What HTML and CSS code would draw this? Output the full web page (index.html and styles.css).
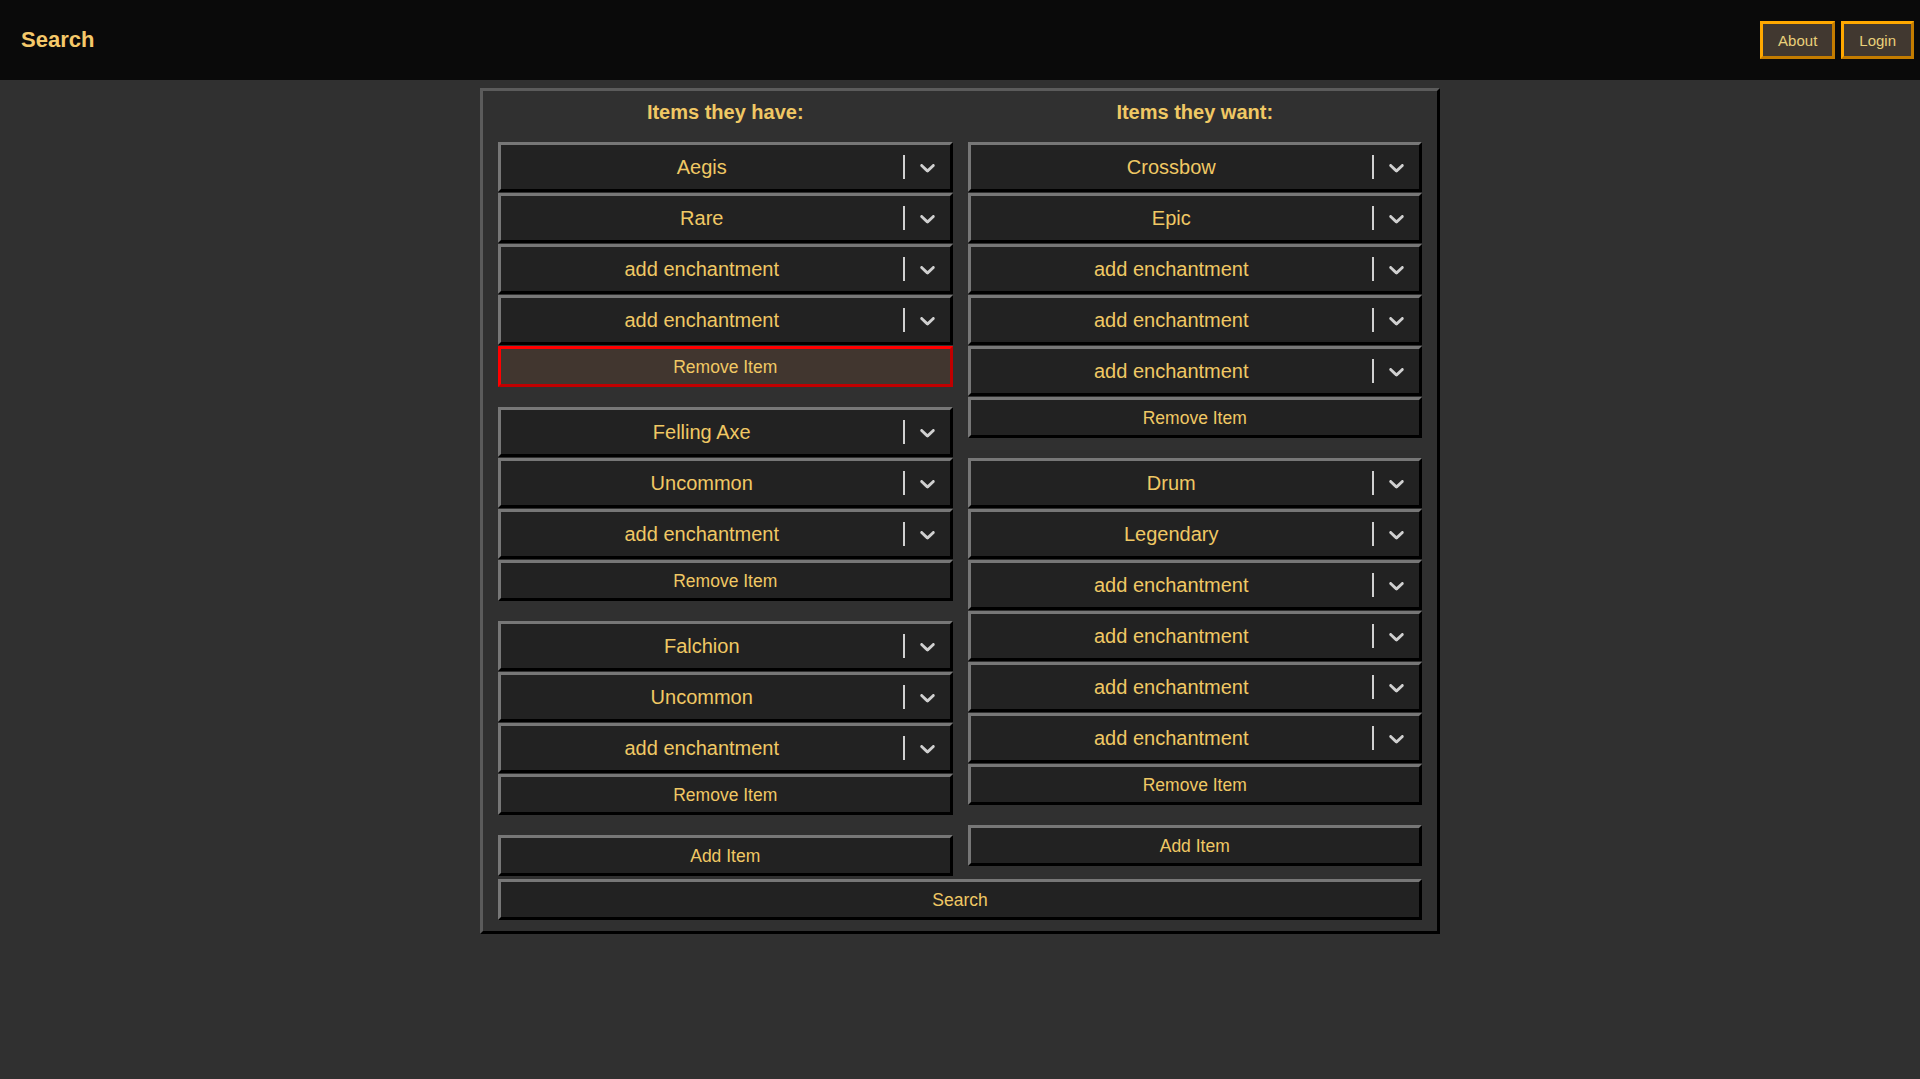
FILE: index.html
```html
<!DOCTYPE html>
<html>
<head>
<meta charset="utf-8">
<link rel="stylesheet" href="styles.css">
</head>
<body>
<header class="topbar">
  <div class="brand">Search</div>
  <nav class="nav">
    <button class="navbtn">About</button>
    <button class="navbtn">Login</button>
  </nav>
</header>
<main class="panel">
  <div class="cols">
    <section class="col">
      <div class="colhead">Items they have:</div>
      <div class="group">
        <div class="sel"><span class="val">Aegis</span><span class="sep"></span><span class="ind"><svg viewBox="0 0 20 20" width="25" height="25"><path d="M4.516 7.548c0.436-0.446 1.043-0.481 1.576 0l3.908 3.747 3.908-3.747c0.533-0.481 1.141-0.446 1.574 0 0.436 0.445 0.408 1.197 0 1.615-0.406 0.418-4.695 4.502-4.695 4.502-0.217 0.223-0.502 0.335-0.787 0.335s-0.57-0.112-0.789-0.335c0 0-4.287-4.084-4.695-4.502s-0.436-1.17 0-1.615z"/></svg></span></div>
        <div class="sel"><span class="val">Rare</span><span class="sep"></span><span class="ind"><svg viewBox="0 0 20 20" width="25" height="25"><path d="M4.516 7.548c0.436-0.446 1.043-0.481 1.576 0l3.908 3.747 3.908-3.747c0.533-0.481 1.141-0.446 1.574 0 0.436 0.445 0.408 1.197 0 1.615-0.406 0.418-4.695 4.502-4.695 4.502-0.217 0.223-0.502 0.335-0.787 0.335s-0.57-0.112-0.789-0.335c0 0-4.287-4.084-4.695-4.502s-0.436-1.17 0-1.615z"/></svg></span></div>
        <div class="sel"><span class="val">add enchantment</span><span class="sep"></span><span class="ind"><svg viewBox="0 0 20 20" width="25" height="25"><path d="M4.516 7.548c0.436-0.446 1.043-0.481 1.576 0l3.908 3.747 3.908-3.747c0.533-0.481 1.141-0.446 1.574 0 0.436 0.445 0.408 1.197 0 1.615-0.406 0.418-4.695 4.502-4.695 4.502-0.217 0.223-0.502 0.335-0.787 0.335s-0.57-0.112-0.789-0.335c0 0-4.287-4.084-4.695-4.502s-0.436-1.17 0-1.615z"/></svg></span></div>
        <div class="sel"><span class="val">add enchantment</span><span class="sep"></span><span class="ind"><svg viewBox="0 0 20 20" width="25" height="25"><path d="M4.516 7.548c0.436-0.446 1.043-0.481 1.576 0l3.908 3.747 3.908-3.747c0.533-0.481 1.141-0.446 1.574 0 0.436 0.445 0.408 1.197 0 1.615-0.406 0.418-4.695 4.502-4.695 4.502-0.217 0.223-0.502 0.335-0.787 0.335s-0.57-0.112-0.789-0.335c0 0-4.287-4.084-4.695-4.502s-0.436-1.17 0-1.615z"/></svg></span></div>
        <button class="btn btn-danger">Remove Item</button>
      </div>
      <div class="group">
        <div class="sel"><span class="val">Felling Axe</span><span class="sep"></span><span class="ind"><svg viewBox="0 0 20 20" width="25" height="25"><path d="M4.516 7.548c0.436-0.446 1.043-0.481 1.576 0l3.908 3.747 3.908-3.747c0.533-0.481 1.141-0.446 1.574 0 0.436 0.445 0.408 1.197 0 1.615-0.406 0.418-4.695 4.502-4.695 4.502-0.217 0.223-0.502 0.335-0.787 0.335s-0.57-0.112-0.789-0.335c0 0-4.287-4.084-4.695-4.502s-0.436-1.17 0-1.615z"/></svg></span></div>
        <div class="sel"><span class="val">Uncommon</span><span class="sep"></span><span class="ind"><svg viewBox="0 0 20 20" width="25" height="25"><path d="M4.516 7.548c0.436-0.446 1.043-0.481 1.576 0l3.908 3.747 3.908-3.747c0.533-0.481 1.141-0.446 1.574 0 0.436 0.445 0.408 1.197 0 1.615-0.406 0.418-4.695 4.502-4.695 4.502-0.217 0.223-0.502 0.335-0.787 0.335s-0.57-0.112-0.789-0.335c0 0-4.287-4.084-4.695-4.502s-0.436-1.17 0-1.615z"/></svg></span></div>
        <div class="sel"><span class="val">add enchantment</span><span class="sep"></span><span class="ind"><svg viewBox="0 0 20 20" width="25" height="25"><path d="M4.516 7.548c0.436-0.446 1.043-0.481 1.576 0l3.908 3.747 3.908-3.747c0.533-0.481 1.141-0.446 1.574 0 0.436 0.445 0.408 1.197 0 1.615-0.406 0.418-4.695 4.502-4.695 4.502-0.217 0.223-0.502 0.335-0.787 0.335s-0.57-0.112-0.789-0.335c0 0-4.287-4.084-4.695-4.502s-0.436-1.17 0-1.615z"/></svg></span></div>
        <button class="btn">Remove Item</button>
      </div>
      <div class="group">
        <div class="sel"><span class="val">Falchion</span><span class="sep"></span><span class="ind"><svg viewBox="0 0 20 20" width="25" height="25"><path d="M4.516 7.548c0.436-0.446 1.043-0.481 1.576 0l3.908 3.747 3.908-3.747c0.533-0.481 1.141-0.446 1.574 0 0.436 0.445 0.408 1.197 0 1.615-0.406 0.418-4.695 4.502-4.695 4.502-0.217 0.223-0.502 0.335-0.787 0.335s-0.57-0.112-0.789-0.335c0 0-4.287-4.084-4.695-4.502s-0.436-1.17 0-1.615z"/></svg></span></div>
        <div class="sel"><span class="val">Uncommon</span><span class="sep"></span><span class="ind"><svg viewBox="0 0 20 20" width="25" height="25"><path d="M4.516 7.548c0.436-0.446 1.043-0.481 1.576 0l3.908 3.747 3.908-3.747c0.533-0.481 1.141-0.446 1.574 0 0.436 0.445 0.408 1.197 0 1.615-0.406 0.418-4.695 4.502-4.695 4.502-0.217 0.223-0.502 0.335-0.787 0.335s-0.57-0.112-0.789-0.335c0 0-4.287-4.084-4.695-4.502s-0.436-1.17 0-1.615z"/></svg></span></div>
        <div class="sel"><span class="val">add enchantment</span><span class="sep"></span><span class="ind"><svg viewBox="0 0 20 20" width="25" height="25"><path d="M4.516 7.548c0.436-0.446 1.043-0.481 1.576 0l3.908 3.747 3.908-3.747c0.533-0.481 1.141-0.446 1.574 0 0.436 0.445 0.408 1.197 0 1.615-0.406 0.418-4.695 4.502-4.695 4.502-0.217 0.223-0.502 0.335-0.787 0.335s-0.57-0.112-0.789-0.335c0 0-4.287-4.084-4.695-4.502s-0.436-1.17 0-1.615z"/></svg></span></div>
        <button class="btn">Remove Item</button>
      </div>
      <button class="btn">Add Item</button>
    </section>
    <section class="col">
      <div class="colhead">Items they want:</div>
      <div class="group">
        <div class="sel"><span class="val">Crossbow</span><span class="sep"></span><span class="ind"><svg viewBox="0 0 20 20" width="25" height="25"><path d="M4.516 7.548c0.436-0.446 1.043-0.481 1.576 0l3.908 3.747 3.908-3.747c0.533-0.481 1.141-0.446 1.574 0 0.436 0.445 0.408 1.197 0 1.615-0.406 0.418-4.695 4.502-4.695 4.502-0.217 0.223-0.502 0.335-0.787 0.335s-0.57-0.112-0.789-0.335c0 0-4.287-4.084-4.695-4.502s-0.436-1.17 0-1.615z"/></svg></span></div>
        <div class="sel"><span class="val">Epic</span><span class="sep"></span><span class="ind"><svg viewBox="0 0 20 20" width="25" height="25"><path d="M4.516 7.548c0.436-0.446 1.043-0.481 1.576 0l3.908 3.747 3.908-3.747c0.533-0.481 1.141-0.446 1.574 0 0.436 0.445 0.408 1.197 0 1.615-0.406 0.418-4.695 4.502-4.695 4.502-0.217 0.223-0.502 0.335-0.787 0.335s-0.57-0.112-0.789-0.335c0 0-4.287-4.084-4.695-4.502s-0.436-1.17 0-1.615z"/></svg></span></div>
        <div class="sel"><span class="val">add enchantment</span><span class="sep"></span><span class="ind"><svg viewBox="0 0 20 20" width="25" height="25"><path d="M4.516 7.548c0.436-0.446 1.043-0.481 1.576 0l3.908 3.747 3.908-3.747c0.533-0.481 1.141-0.446 1.574 0 0.436 0.445 0.408 1.197 0 1.615-0.406 0.418-4.695 4.502-4.695 4.502-0.217 0.223-0.502 0.335-0.787 0.335s-0.57-0.112-0.789-0.335c0 0-4.287-4.084-4.695-4.502s-0.436-1.17 0-1.615z"/></svg></span></div>
        <div class="sel"><span class="val">add enchantment</span><span class="sep"></span><span class="ind"><svg viewBox="0 0 20 20" width="25" height="25"><path d="M4.516 7.548c0.436-0.446 1.043-0.481 1.576 0l3.908 3.747 3.908-3.747c0.533-0.481 1.141-0.446 1.574 0 0.436 0.445 0.408 1.197 0 1.615-0.406 0.418-4.695 4.502-4.695 4.502-0.217 0.223-0.502 0.335-0.787 0.335s-0.57-0.112-0.789-0.335c0 0-4.287-4.084-4.695-4.502s-0.436-1.17 0-1.615z"/></svg></span></div>
        <div class="sel"><span class="val">add enchantment</span><span class="sep"></span><span class="ind"><svg viewBox="0 0 20 20" width="25" height="25"><path d="M4.516 7.548c0.436-0.446 1.043-0.481 1.576 0l3.908 3.747 3.908-3.747c0.533-0.481 1.141-0.446 1.574 0 0.436 0.445 0.408 1.197 0 1.615-0.406 0.418-4.695 4.502-4.695 4.502-0.217 0.223-0.502 0.335-0.787 0.335s-0.57-0.112-0.789-0.335c0 0-4.287-4.084-4.695-4.502s-0.436-1.17 0-1.615z"/></svg></span></div>
        <button class="btn">Remove Item</button>
      </div>
      <div class="group">
        <div class="sel"><span class="val">Drum</span><span class="sep"></span><span class="ind"><svg viewBox="0 0 20 20" width="25" height="25"><path d="M4.516 7.548c0.436-0.446 1.043-0.481 1.576 0l3.908 3.747 3.908-3.747c0.533-0.481 1.141-0.446 1.574 0 0.436 0.445 0.408 1.197 0 1.615-0.406 0.418-4.695 4.502-4.695 4.502-0.217 0.223-0.502 0.335-0.787 0.335s-0.57-0.112-0.789-0.335c0 0-4.287-4.084-4.695-4.502s-0.436-1.17 0-1.615z"/></svg></span></div>
        <div class="sel"><span class="val">Legendary</span><span class="sep"></span><span class="ind"><svg viewBox="0 0 20 20" width="25" height="25"><path d="M4.516 7.548c0.436-0.446 1.043-0.481 1.576 0l3.908 3.747 3.908-3.747c0.533-0.481 1.141-0.446 1.574 0 0.436 0.445 0.408 1.197 0 1.615-0.406 0.418-4.695 4.502-4.695 4.502-0.217 0.223-0.502 0.335-0.787 0.335s-0.57-0.112-0.789-0.335c0 0-4.287-4.084-4.695-4.502s-0.436-1.17 0-1.615z"/></svg></span></div>
        <div class="sel"><span class="val">add enchantment</span><span class="sep"></span><span class="ind"><svg viewBox="0 0 20 20" width="25" height="25"><path d="M4.516 7.548c0.436-0.446 1.043-0.481 1.576 0l3.908 3.747 3.908-3.747c0.533-0.481 1.141-0.446 1.574 0 0.436 0.445 0.408 1.197 0 1.615-0.406 0.418-4.695 4.502-4.695 4.502-0.217 0.223-0.502 0.335-0.787 0.335s-0.57-0.112-0.789-0.335c0 0-4.287-4.084-4.695-4.502s-0.436-1.17 0-1.615z"/></svg></span></div>
        <div class="sel"><span class="val">add enchantment</span><span class="sep"></span><span class="ind"><svg viewBox="0 0 20 20" width="25" height="25"><path d="M4.516 7.548c0.436-0.446 1.043-0.481 1.576 0l3.908 3.747 3.908-3.747c0.533-0.481 1.141-0.446 1.574 0 0.436 0.445 0.408 1.197 0 1.615-0.406 0.418-4.695 4.502-4.695 4.502-0.217 0.223-0.502 0.335-0.787 0.335s-0.57-0.112-0.789-0.335c0 0-4.287-4.084-4.695-4.502s-0.436-1.17 0-1.615z"/></svg></span></div>
        <div class="sel"><span class="val">add enchantment</span><span class="sep"></span><span class="ind"><svg viewBox="0 0 20 20" width="25" height="25"><path d="M4.516 7.548c0.436-0.446 1.043-0.481 1.576 0l3.908 3.747 3.908-3.747c0.533-0.481 1.141-0.446 1.574 0 0.436 0.445 0.408 1.197 0 1.615-0.406 0.418-4.695 4.502-4.695 4.502-0.217 0.223-0.502 0.335-0.787 0.335s-0.57-0.112-0.789-0.335c0 0-4.287-4.084-4.695-4.502s-0.436-1.17 0-1.615z"/></svg></span></div>
        <div class="sel"><span class="val">add enchantment</span><span class="sep"></span><span class="ind"><svg viewBox="0 0 20 20" width="25" height="25"><path d="M4.516 7.548c0.436-0.446 1.043-0.481 1.576 0l3.908 3.747 3.908-3.747c0.533-0.481 1.141-0.446 1.574 0 0.436 0.445 0.408 1.197 0 1.615-0.406 0.418-4.695 4.502-4.695 4.502-0.217 0.223-0.502 0.335-0.787 0.335s-0.57-0.112-0.789-0.335c0 0-4.287-4.084-4.695-4.502s-0.436-1.17 0-1.615z"/></svg></span></div>
        <button class="btn">Remove Item</button>
      </div>
      <button class="btn">Add Item</button>
    </section>
  </div>
  <button class="btn btn-search">Search</button>
</main>
</body>
</html>
```

FILE: styles.css
```css
html, body {
  margin: 0;
  padding: 0;
}
body {
  background: #303030;
  font-family: "Liberation Sans", Arial, sans-serif;
  color: #f0c864;
  min-height: 1079px;
}
.topbar {
  height: 80px;
  background: #0a0a0a;
  display: flex;
  align-items: center;
  justify-content: space-between;
  padding: 0 6px 0 21px;
  box-sizing: border-box;
}
.brand {
  font-size: 22px;
  font-weight: bold;
  color: #f5c96a;
}
.nav {
  display: flex;
  gap: 6px;
}
.navbtn {
  height: 38px;
  padding: 0 15px;
  font-family: "Liberation Sans", Arial, sans-serif;
  font-size: 15px;
  color: #e9d07a;
  background: #413830;
  border: 3px solid;
  border-color: #ffa800 #c47c00 #c47c00 #ffa800;
  cursor: pointer;
}
.panel {
  width: 960px;
  box-sizing: border-box;
  margin: 8px auto 0;
  border: 3px solid;
  border-color: #5b5b5b #000 #000 #5b5b5b;
  padding: 0 15px 11px;
  background: #303030;
}
.cols {
  display: grid;
  grid-template-columns: 1fr 1fr;
  gap: 15px;
  align-items: start;
}
.col {
  display: flex;
  flex-direction: column;
}
.colhead {
  height: 42px;
  line-height: 42px;
  margin-bottom: 9px;
  text-align: center;
  font-size: 20px;
  font-weight: bold;
  color: #f0c864;
}
.group {
  display: flex;
  flex-direction: column;
  margin-bottom: 20px;
}
.sel {
  height: 50px;
  box-sizing: border-box;
  margin-bottom: 1px;
  background: #222;
  border: 3px solid;
  border-color: #777 #000 #000 #777;
  display: flex;
  align-items: center;
}
.val {
  flex: 1;
  text-align: center;
  font-size: 20px;
  color: #f0c864;
}
.sep {
  width: 2px;
  height: 24px;
  background: #d0d0d0;
}
.ind {
  width: 45px;
  display: flex;
  justify-content: center;
  align-items: center;
}
.ind svg {
  fill: #d0d0d0;
  display: block;
}
.btn {
  height: 41px;
  box-sizing: border-box;
  width: 100%;
  background: #222;
  border: 3px solid;
  border-color: #777 #000 #000 #777;
  font-family: "Liberation Sans", Arial, sans-serif;
  font-size: 17.5px;
  color: #f0c864;
  cursor: pointer;
  padding: 2px 0 0;
}
.btn-danger {
  background: #41362f;
  border-color: #ff0000 #c00000 #c00000 #ff0000;
}
.btn-search {
  margin-top: 3px;
  display: block;
}
```
